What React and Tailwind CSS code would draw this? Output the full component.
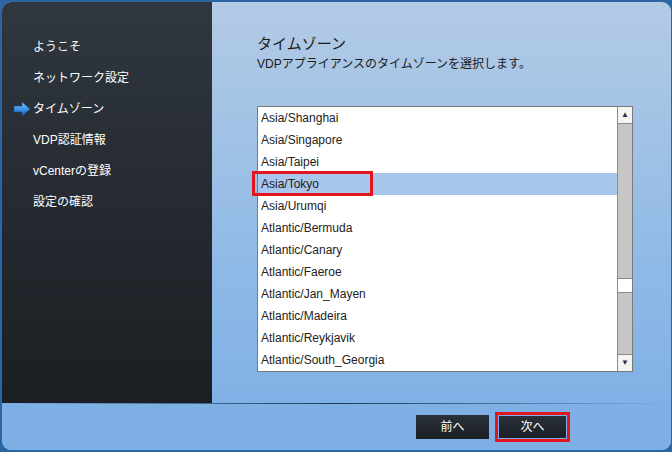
import React from "react";

const font = { fontFamily: '"Liberation Sans", "Noto Sans CJK JP", sans-serif' };

const steps = ["ようこそ", "ネットワーク設定", "タイムゾーン", "VDP認証情報", "vCenterの登録", "設定の確認"];
const zones = [
  "Asia/Shanghai",
  "Asia/Singapore",
  "Asia/Taipei",
  "Asia/Tokyo",
  "Asia/Urumqi",
  "Atlantic/Bermuda",
  "Atlantic/Canary",
  "Atlantic/Faeroe",
  "Atlantic/Jan_Mayen",
  "Atlantic/Madeira",
  "Atlantic/Reykjavik",
  "Atlantic/South_Georgia",
];

function Arrow() {
  return (
    <svg width="18" height="16" viewBox="0 0 18 16" className="absolute left-[11px] top-[7px]">
      <defs>
        <linearGradient id="ag" x1="0" y1="0" x2="0" y2="1">
          <stop offset="0" stopColor="#8cc8ff" />
          <stop offset="0.5" stopColor="#3f95e8" />
          <stop offset="1" stopColor="#1c5fb0" />
        </linearGradient>
      </defs>
      <path d="M1 5 L9 5 L9 1 L17 8 L9 15 L9 11 L1 11 Z" fill="url(#ag)" stroke="#1a4f8f" strokeWidth="0.6" />
    </svg>
  );
}

export default function App() {
  return (
    <div className="w-[672px] h-[452px] bg-[#2b66a2] p-[2px] pr-[1px] overflow-hidden" style={font}>
      <div className="w-full h-full rounded-[9px] overflow-hidden flex flex-col bg-gradient-to-b from-[#b3cbe5] via-[#94bce6] to-[#7aaee6]">
        <div className="flex h-[401px]">
          <div className="w-[210px] bg-gradient-to-b from-[#30373e] to-[#1b1f24] pt-[30px] flex flex-col text-white text-[12px]">
            {steps.map((s, i) => (
              <div key={s} className="relative h-[31px] pl-[31px] leading-[31px]">
                {i === 2 && <Arrow />}
                {s}
              </div>
            ))}
          </div>
          <div className="flex-1 pl-[45px] pt-[32px] text-[#1c1c1c]">
            <div className="text-[15px] leading-[20px]">タイムゾーン</div>
            <div className="text-[12px] leading-[16px] mt-[2px]">VDPアプライアンスのタイムゾーンを選択します。</div>
            <div className="mt-[34px] w-[376px] h-[266px] border border-[#7a7a7a] bg-white flex">
              <div className="flex-1 flex flex-col">
                {zones.map((z) => (
                  <div
                    key={z}
                    className={
                      "relative h-[22px] leading-[22px] pl-[3px] text-[12px] text-[#222] " +
                      (z === "Asia/Tokyo" ? "bg-[#a9c7ec]" : "")
                    }
                  >
                    {z}
                    {z === "Asia/Tokyo" && (
                      <div className="absolute left-[-6px] top-[-2px] w-[121px] h-[25px] border-[3px] border-[#e3151f]" />
                    )}
                  </div>
                ))}
              </div>
              <div className="w-[15px] flex flex-col bg-[#c6c6c6] border-l border-[#8a8a8a]">
                <div className="h-[17px] bg-[#f4f4f4] border-b border-[#8a8a8a] flex items-center justify-center text-[8px] text-[#333]">▲</div>
                <div className="flex-1 flex flex-col">
                  <div className="h-[154px]" />
                  <div className="h-[15px] bg-white border-y border-[#8a8a8a]" />
                </div>
                <div className="h-[17px] bg-[#f4f4f4] border-t border-[#8a8a8a] flex items-center justify-center text-[8px] text-[#333]">▼</div>
              </div>
            </div>
          </div>
        </div>
        <div className="h-[1px] bg-gradient-to-r from-[#7eb0e5] via-[#1c3a5e] to-[#7eb0e5]" />
        <div className="flex-1 bg-[#7eb0e5] flex items-start justify-end pr-[101px] pt-[11px] gap-[6px]">
          <button className="w-[73px] h-[24px] bg-gradient-to-b from-[#2a3138] to-[#1b2026] text-white text-[12px]">前へ</button>
          <div className="border-[3px] border-[#e3151f] p-[1px] -mt-[3px]">
            <button className="w-[67px] h-[22px] bg-gradient-to-b from-[#2a3138] to-[#1b2026] text-white text-[12px] block">次へ</button>
          </div>
        </div>
      </div>
    </div>
  );
}
